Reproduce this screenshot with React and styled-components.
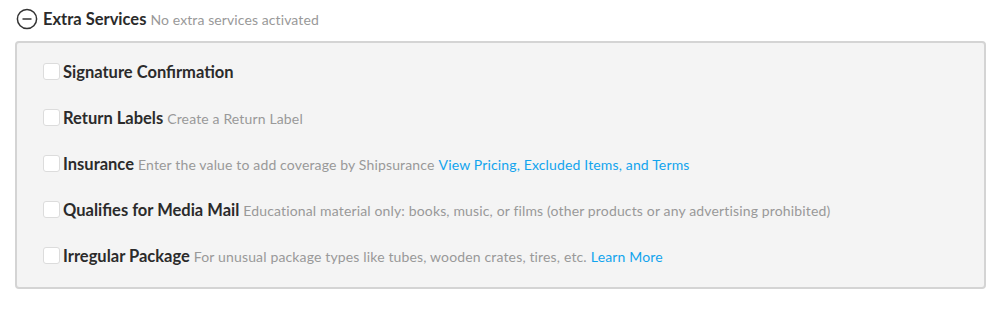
import styled, { createGlobalStyle } from "styled-components";

const services = [
  { title: "Signature Confirmation" },
  { title: "Return Labels", note: "Create a Return Label" },
  {
    title: "Insurance",
    note: "Enter the value to add coverage by Shipsurance",
    link: "View Pricing, Excluded Items, and Terms",
  },
  {
    title: "Qualifies for Media Mail",
    note: "Educational material only: books, music, or films (other products or any advertising prohibited)",
  },
  {
    title: "Irregular Package",
    note: "For unusual package types like tubes, wooden crates, tires, etc.",
    link: "Learn More",
  },
];

const GlobalStyle = createGlobalStyle`
  body {
    margin: 0;
    background: #ffffff;
    font-family: Lato, "Open Sans", sans-serif;
  }
`;

const App = () => {
  return (
    <>
      <GlobalStyle />
      <Page>
        <Header>
          <CollapseIcon width="22" height="22" viewBox="0 0 22 22">
            <circle cx="11" cy="11" r="9.6" fill="none" stroke="#333" strokeWidth="1.5" />
            <line x1="6.5" y1="11" x2="15.5" y2="11" stroke="#333" strokeWidth="1.5" />
          </CollapseIcon>
          <HeaderTitle>Extra Services</HeaderTitle>
          <HeaderNote>No extra services activated</HeaderNote>
        </Header>
        <Panel>
          {services.map((s) => (
            <Row key={s.title}>
              <Checkbox />
              <Label>{s.title}</Label>
              {s.note && <Note>{s.note}</Note>}
              {s.link && <Link href="#">{s.link}</Link>}
            </Row>
          ))}
        </Panel>
      </Page>
    </>
  );
};

export default App;

const Page = styled.div`
  padding: 7px 13px 0 15px;
`;

const Header = styled.div`
  display: flex;
  align-items: center;
  height: 24px;
  margin-bottom: 10px;
`;

const CollapseIcon = styled.svg`
  margin-left: 1px;
  margin-right: 5px;
  flex-shrink: 0;
`;

const HeaderTitle = styled.span`
  font-size: 16.5px;
  font-weight: 700;
  color: #2b2b2b;
`;

const HeaderNote = styled.span`
  margin-left: 4px;
  font-size: 14px;
  letter-spacing: 0.1px;
  color: #999;
`;

const Panel = styled.div`
  display: flex;
  flex-direction: column;
  gap: 22px;
  padding: 17px 26px 19px;
  background: #f4f4f4;
  border: 2px solid #d4d4d4;
  border-radius: 4px;
`;

const Row = styled.div`
  display: flex;
  align-items: center;
  height: 24px;
  white-space: nowrap;
`;

const Checkbox = styled.span`
  width: 15px;
  height: 15px;
  margin-right: 3px;
  margin-top: -2px;
  background: #fff;
  border: 1px solid #dcdcdc;
  border-radius: 3px;
  flex-shrink: 0;
`;

const Label = styled.span`
  font-size: 16.5px;
  font-weight: 700;
  color: #2b2b2b;
`;

const Note = styled.span`
  margin-left: 4px;
  font-size: 14px;
  letter-spacing: 0.15px;
  color: #999;
`;

const Link = styled.a`
  margin-left: 4px;
  font-size: 14px;
  letter-spacing: 0.15px;
  color: #12a4ee;
  text-decoration: none;
`;
